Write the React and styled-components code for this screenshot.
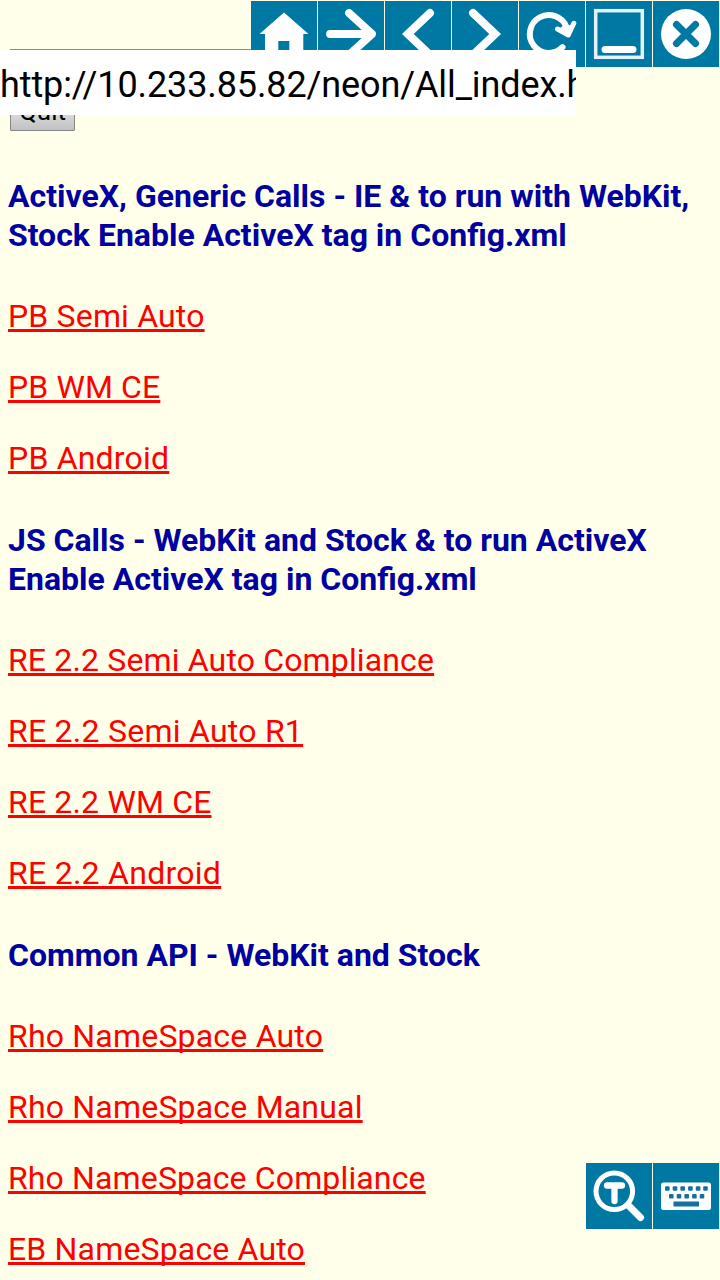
import React from "react";
import styled, { createGlobalStyle } from "styled-components";

const GlobalStyle = createGlobalStyle`
  html, body { margin: 0; padding: 0; overflow: hidden; background: #ffffea; }
`;

const Screen = styled.div`
  position: relative;
  width: 720px;
  height: 1280px;
  overflow: hidden;
  background: #ffffea;
  font-family: Roboto, "Liberation Sans", sans-serif;
`;

const Page = styled.main`
  display: flex;
  flex-direction: column;
  padding: 49px 8px 0;
`;

const Controls = styled.div`
  display: flex;
  flex-direction: column;
  align-items: flex-start;
  gap: 6px;
  padding-left: 2px;
  height: 82px;
  margin-bottom: 46px;
`;

const PageField = styled.input`
  box-sizing: border-box;
  width: 300px;
  height: 40px;
  padding: 0;
  border: 1px solid #8c8c86;
  background: #fff;
`;

const QuitButton = styled.button`
  box-sizing: border-box;
  display: flex;
  justify-content: center;
  align-items: flex-start;
  width: 65px;
  height: 36px;
  padding: 0;
  border: 1px solid #858585;
  border-radius: 1px;
  background: linear-gradient(#f2f2f2, #c2c2c2);
  color: #000;
  font: 26px/31px Roboto, sans-serif;
`;

const Heading = styled.h4`
  margin: 0;
  color: #0000a0;
  font-size: 32px;
  font-weight: 700;
  line-height: 39px;
  white-space: pre-line;
`;

const LinkList = styled.div`
  display: flex;
  flex-direction: column;
  align-items: flex-start;
  gap: 32px;
  padding: 42px 0 43px;
`;

const PageLink = styled.a`
  color: #ff0000;
  font-size: 32px;
  line-height: 39px;
  letter-spacing: ${(p) => p.$tracking}px;
  white-space: nowrap;
  text-decoration: underline;
  text-decoration-thickness: 3px;
  text-underline-offset: 2px;
  text-decoration-skip-ink: none;
`;

const Toolbar = styled.div`
  position: absolute;
  right: 1px;
  display: flex;
  gap: 1px;
  ${(p) => (p.$bottom ? "top: 1163px;" : "top: 1px;")}
`;

const ToolButton = styled.div`
  width: 66px;
  height: 66px;
  background: #0078a4;
  box-shadow: inset 0 0 1px #006c98;
  svg { display: block; }
`;

const AddressBar = styled.div`
  position: absolute;
  top: 50px;
  left: 0;
  width: 576px;
  height: 65px;
  overflow: hidden;
  background: #fff;
  color: #000;
  font-size: 36px;
  line-height: 70px;
  white-space: nowrap;
  letter-spacing: -0.11px;
`;

const Icon = ({ children }) => (
  <ToolButton>
    <svg width="66" height="66" viewBox="0 0 66 66" fill="none" stroke="#fff" strokeLinecap="round" strokeLinejoin="round">
      {children}
    </svg>
  </ToolButton>
);

const HomeIcon = () => (
  <Icon>
    <path d="M33 11.500 L57.500 33 H52.300 V56 H38.300 V40 H27.300 V56 H14 V33 H8.500 Z" fill="#fff" stroke="none" />
  </Icon>
);
const ArrowIcon = () => (
  <Icon><path d="M12 33 H54 M31 12 L54 33 L31 54" strokeWidth="7.800" /></Icon>
);
const BackIcon = () => (
  <Icon><path d="M45 12 L22.800 33 L45 54" strokeWidth="8" strokeLinejoin="miter" /></Icon>
);
const ForwardIcon = () => (
  <Icon><path d="M21 12 L43.200 33 L21 54" strokeWidth="8" strokeLinejoin="miter" /></Icon>
);
const RefreshIcon = () => (
  <Icon>
    <path d="M43.500 46.200 A19 19 0 1 1 47.500 26" strokeWidth="6" />
    <path d="M38.500 28 L49.300 34 L54.800 22.300" strokeWidth="5" />
    <path d="M40 28 L49 34 L53 25 L46 23 Z" fill="#fff" stroke="none" />
  </Icon>
);
const MinimizeIcon = () => (
  <Icon>
    <rect x="9.700" y="9.700" width="46.600" height="46.600" stroke="#e5f1f8" strokeWidth="3.500" strokeLinejoin="miter" />
    <path d="M19 48.500 H47" strokeWidth="7" />
  </Icon>
);
const CloseIcon = () => (
  <Icon>
    <circle cx="33" cy="33" r="25" fill="#fff" stroke="none" />
    <path d="M23.500 23.500 L42.500 42.500 M42.500 23.500 L23.500 42.500" stroke="#0078a4" strokeWidth="7" />
  </Icon>
);
const TextZoomIcon = () => (
  <Icon>
    <circle cx="28.300" cy="28.300" r="18.300" strokeWidth="5" />
    <path d="M43 43 L54.500 54.500" strokeWidth="7" />
    <path d="M21 22.500 H36 M28.500 23 V38" strokeWidth="6.300" />
  </Icon>
);
const KeyboardIcon = () => (
  <Icon>
    <rect x="8" y="19.500" width="50" height="27.500" rx="2.500" fill="#fff" stroke="none" />
    <g fill="#176f9f" stroke="none">
      {[12, 19.700, 27.400, 35.100, 42.800, 50.200].map((x) => (
        <rect key={x} x={x} y="23.200" width="4.600" height="4.600" rx="1" />
      ))}
      {[16, 23.700, 31.400, 39.100, 46.700].map((x) => (
        <rect key={x} x={x} y="31" width="4.600" height="4.600" rx="1" />
      ))}
      <rect x="20.500" y="38.500" width="25.500" height="5" />
    </g>
  </Icon>
);

const sections = [
  {
    title: "ActiveX, Generic Calls - IE & to run with WebKit,\nStock Enable ActiveX tag in Config.xml",
    links: [["PB Semi Auto", 0.17], ["PB WM CE", 0.12], ["PB Android", 0.2]],
  },
  {
    title: "JS Calls - WebKit and Stock & to run ActiveX\nEnable ActiveX tag in Config.xml",
    links: [
      ["RE 2.2 Semi Auto Compliance", 0.15],
      ["RE 2.2 Semi Auto R1", 0.25],
      ["RE 2.2 WM CE", 0.17],
      ["RE 2.2 Android", 0.27],
    ],
  },
  {
    title: "Common API - WebKit and Stock",
    links: [
      ["Rho NameSpace Auto", 0.2],
      ["Rho NameSpace Manual", 0.2],
      ["Rho NameSpace Compliance", 0.14],
      ["EB NameSpace Auto", 0.17],
    ],
  },
];

export default function App() {
  return (
    <Screen>
      <GlobalStyle />
      <Page>
        <Controls>
          <PageField readOnly />
          <QuitButton>Quit</QuitButton>
        </Controls>
        {sections.map((s) => (
          <section key={s.title}>
            <Heading>{s.title}</Heading>
            <LinkList>
              {s.links.map(([label, tracking]) => (
                <PageLink key={label} href="#" $tracking={tracking}>{label}</PageLink>
              ))}
            </LinkList>
          </section>
        ))}
      </Page>
      <Toolbar>
        <HomeIcon />
        <ArrowIcon />
        <BackIcon />
        <ForwardIcon />
        <RefreshIcon />
        <MinimizeIcon />
        <CloseIcon />
      </Toolbar>
      <AddressBar>http://10.233.85.82/neon/All_index.html</AddressBar>
      <Toolbar $bottom>
        <TextZoomIcon />
        <KeyboardIcon />
      </Toolbar>
    </Screen>
  );
}
